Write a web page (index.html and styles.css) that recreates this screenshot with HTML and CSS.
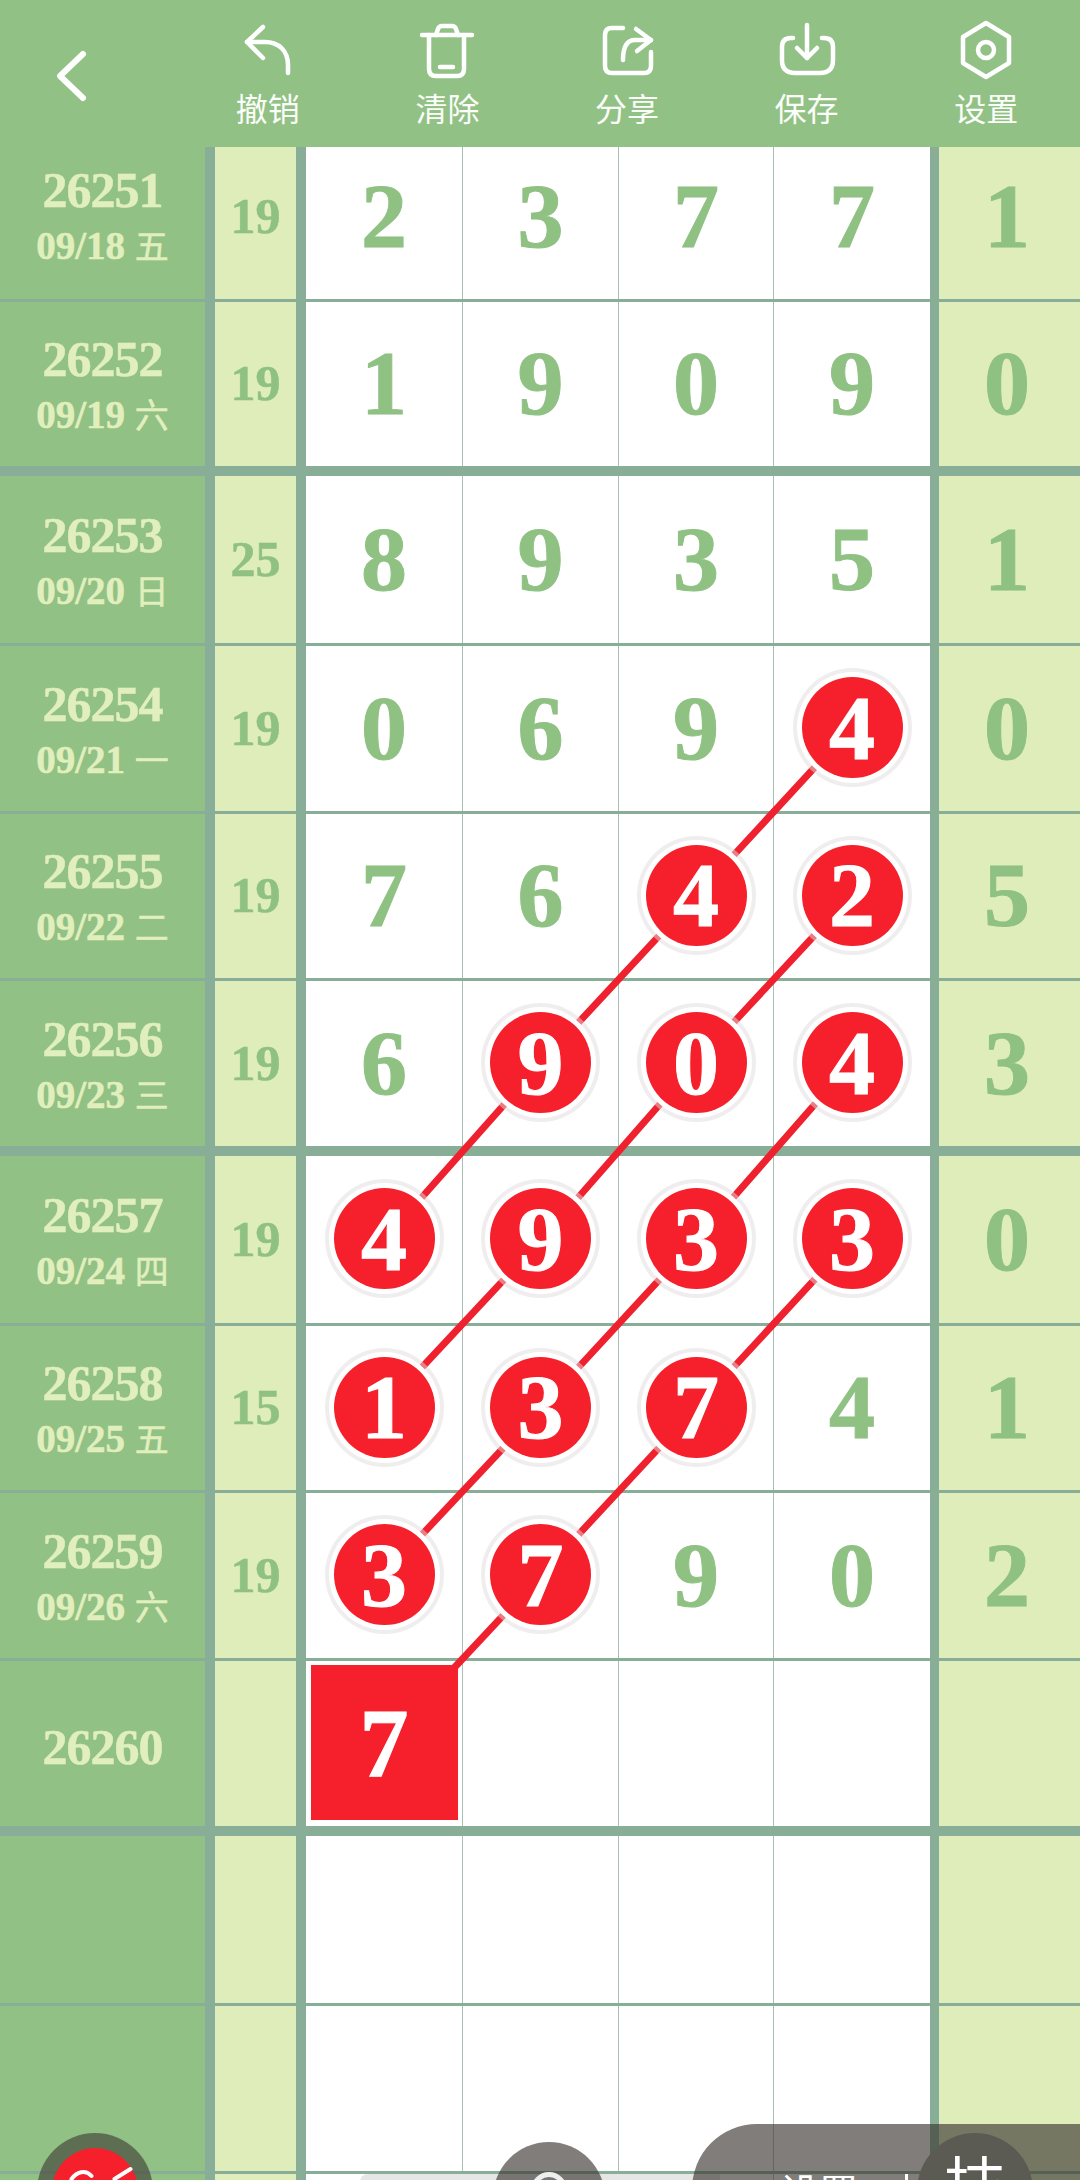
FILE: index.html
```html
<!DOCTYPE html>
<html lang="zh">
<head>
    <meta charset="UTF-8">
    <meta name="viewport" content="width=device-width, initial-scale=1.0">
    <title>走势图</title>
    <link rel="stylesheet" href="styles.css">
</head>
<body>
<div class="page">
    <header class="toolbar">
        <div class="back">
            <svg class="back-icon" viewBox="0 0 40 60"><path d="M28 8 L5 30 L28 52"/></svg>
        </div>
        <div class="tool">
            <svg viewBox="0 0 60 60"><path d="M9 22 H27 C41 22 50 31 50 45 V53"/><path d="M25 7 L9 22 L25 38"/></svg>
            <span>撤销</span>
        </div>
        <div class="tool">
            <svg viewBox="0 0 60 60"><path d="M5 15 H55"/><path d="M19 15 L21 9 Q22 6 25 6 H35 Q38 6 39 9 L41 15"/><path d="M12 15 V49 Q12 56 19 56 H40 Q47 56 47 49 V15"/><path d="M23 47 H36"/></svg>
            <span>清除</span>
        </div>
        <div class="tool">
            <svg viewBox="0 0 60 60"><path d="M26 8 H15 Q8 8 8 15 V46 Q8 53 15 53 H47 Q54 53 54 46 V32"/><path d="M54 20 H38 Q26 20 26 40"/><path d="M39 9 L54 20 L40 31"/></svg>
            <span>分享</span>
        </div>
        <div class="tool">
            <svg viewBox="0 0 60 60"><path d="M16 18 H14 Q5 18 5 27 V40 Q5 53 18 53 H43 Q56 53 56 40 V27 Q56 18 47 18 H45"/><path d="M30 5 V38"/><path d="M20 28 L30 38 L40 28"/></svg>
            <span>保存</span>
        </div>
        <div class="tool">
            <svg viewBox="0 0 60 60"><path d="M30 3 L53 17 V43 L30 57 L7 43 V17 Z"/><circle cx="30" cy="30" r="8"/></svg>
            <span>设置</span>
        </div>
    </header>

    <main class="board">
        <div class="row first">
            <div class="issue"><b>26251</b><i>09/18 <em>五</em></i></div>
            <div class="sum">19</div>
            <div class="num">2</div><div class="num">3</div><div class="num">7</div><div class="num">7</div>
            <div class="tail">1</div>
        </div>
        <div class="row thick">
            <div class="issue"><b>26252</b><i>09/19 <em>六</em></i></div>
            <div class="sum">19</div>
            <div class="num">1</div><div class="num">9</div><div class="num">0</div><div class="num">9</div>
            <div class="tail">0</div>
        </div>
        <div class="row">
            <div class="issue"><b>26253</b><i>09/20 <em>日</em></i></div>
            <div class="sum">25</div>
            <div class="num">8</div><div class="num">9</div><div class="num">3</div><div class="num">5</div>
            <div class="tail">1</div>
        </div>
        <div class="row">
            <div class="issue"><b>26254</b><i>09/21 <em>一</em></i></div>
            <div class="sum">19</div>
            <div class="num">0</div><div class="num">6</div><div class="num">9</div><div class="num"><span class="ball">4</span></div>
            <div class="tail">0</div>
        </div>
        <div class="row">
            <div class="issue"><b>26255</b><i>09/22 <em>二</em></i></div>
            <div class="sum">19</div>
            <div class="num">7</div><div class="num">6</div><div class="num"><span class="ball">4</span></div><div class="num"><span class="ball">2</span></div>
            <div class="tail">5</div>
        </div>
        <div class="row thick">
            <div class="issue"><b>26256</b><i>09/23 <em>三</em></i></div>
            <div class="sum">19</div>
            <div class="num">6</div><div class="num"><span class="ball">9</span></div><div class="num"><span class="ball">0</span></div><div class="num"><span class="ball">4</span></div>
            <div class="tail">3</div>
        </div>
        <div class="row">
            <div class="issue"><b>26257</b><i>09/24 <em>四</em></i></div>
            <div class="sum">19</div>
            <div class="num"><span class="ball">4</span></div><div class="num"><span class="ball">9</span></div><div class="num"><span class="ball">3</span></div><div class="num"><span class="ball">3</span></div>
            <div class="tail">0</div>
        </div>
        <div class="row">
            <div class="issue"><b>26258</b><i>09/25 <em>五</em></i></div>
            <div class="sum">15</div>
            <div class="num"><span class="ball">1</span></div><div class="num"><span class="ball">3</span></div><div class="num"><span class="ball">7</span></div><div class="num">4</div>
            <div class="tail">1</div>
        </div>
        <div class="row">
            <div class="issue"><b>26259</b><i>09/26 <em>六</em></i></div>
            <div class="sum">19</div>
            <div class="num"><span class="ball">3</span></div><div class="num"><span class="ball">7</span></div><div class="num">9</div><div class="num">0</div>
            <div class="tail">2</div>
        </div>
        <div class="row thick">
            <div class="issue"><b>26260</b></div>
            <div class="sum"></div>
            <div class="num"><span class="pick">7</span></div><div class="num"></div><div class="num"></div><div class="num"></div>
            <div class="tail"></div>
        </div>
        <div class="row">
            <div class="issue"></div><div class="sum"></div>
            <div class="num"></div><div class="num"></div><div class="num"></div><div class="num"></div>
            <div class="tail"></div>
        </div>
        <div class="row">
            <div class="issue"></div><div class="sum"></div>
            <div class="num"></div><div class="num"></div><div class="num"></div><div class="num"></div>
            <div class="tail"></div>
        </div>
        <div class="row last">
            <div class="issue"></div><div class="sum"></div>
            <div class="num"></div><div class="num"></div><div class="num"></div><div class="num"></div>
            <div class="tail"></div>
        </div>
    </main>

    <!-- links between the picked numbers -->
    <svg class="links" viewBox="0 0 1080 2180">
        <polyline points="851,728 696,896 541,1063 384,1240"/>
        <polyline points="851,896 696,1063 541,1240 384,1408"/>
        <polyline points="851,1063 696,1240 541,1408 384,1575"/>
        <polyline points="851,1240 696,1408 541,1575 454,1668"/>
    </svg>

    <!-- floating controls, cut by the bottom of the screen -->
    <div class="fab-pen">
        <div class="fab-pen-inner">
            <svg viewBox="0 0 85 40"><path d="M19 31 C24 24 33 21 39 28"/><path d="M62 31 L78 21"/></svg>
        </div>
    </div>
    <div class="tray"></div>
    <div class="fab-grey"><div class="fab-ring"></div></div>
    <div class="pill"><span class="pill-text">设置</span><span class="pill-bar"></span></div>
    <div class="fab-dark">技</div>
</div>
</body>
</html>
```

FILE: styles.css
```css
* {
    box-sizing: border-box;
}
html, body {
    margin: 0;
    padding: 0;
}
body {
    font-family: "Liberation Serif", "Noto Sans CJK SC", serif;
}
.page {
    position: relative;
    width: 1080px;
    height: 2180px;
    overflow: hidden;
    background-color: #fff;
}

/* toolbar */
.toolbar {
    display: flex;
    height: 147px;
    padding-right: 4px;
    background-color: #92c186;
}
.back {
    width: 178px;
    padding: 46px 0 0 55px;
}
.back-icon {
    display: block;
    width: 40px;
    height: 60px;
}
.toolbar svg {
    fill: none;
    stroke: #fff;
    stroke-width: 4.5;
    stroke-linecap: round;
    stroke-linejoin: round;
}
.toolbar .back-icon {
    stroke-width: 6;
}
.tool {
    flex: 1;
    display: flex;
    flex-direction: column;
    align-items: center;
    padding-top: 20px;
}
.tool svg {
    display: block;
    width: 60px;
    height: 60px;
}
.tool span {
    margin-top: 9px;
    font-family: "Noto Sans CJK SC", sans-serif;
    font-size: 32px;
    line-height: 36px;
    color: #fbfdf8;
}

/* board */
.board {
    display: grid;
    height: 2033px;
    grid-template-rows: 155px 174px 170px 168px 167px 175px 170px 167px 168px 175px 170px 168px 1fr;
}
.row {
    display: grid;
    grid-template-columns: 215px 91px 157px 156px 155px 156px 150px;
    border-bottom: 3px solid #88ae97;
    min-height: 0;
}
.row.thick {
    border-bottom-width: 10px;
}
.row.last {
    border-bottom: 0;
}
.row > div {
    display: flex;
    align-items: center;
    justify-content: center;
    font-weight: bold;
}
.issue {
    flex-direction: column;
    padding-top: 6px;
    background-color: #92c186;
    border-right: 10px solid #88ae97;
    color: #e1efbd;
    -webkit-text-stroke: 0.5px #e1efbd;
}
.issue b {
    font-size: 50px;
    line-height: 58px;
    letter-spacing: -1px;
}
.issue i {
    font-style: normal;
    font-size: 39px;
    line-height: 54px;
}
.issue em {
    font-style: normal;
    font-weight: normal;
    font-size: 34px;
}
.sum {
    padding-bottom: 2px;
    background-color: #dfedbb;
    border-right: 10px solid #88ae97;
    color: #8fc183;
    font-size: 50px;
    -webkit-text-stroke: 0.5px #8fc183;
}
.num {
    padding-bottom: 2px;
    border-right: 1px solid #a9c0b4;
    color: #8fc183;
    font-size: 92px;
    -webkit-text-stroke: 1px #8fc183;
}
.row .num:nth-child(6) {
    border-right: 0;
}
.tail {
    padding: 0 5px 2px 0;
    background-color: #dfedbb;
    border-left: 9px solid #88ae97;
    color: #8fc183;
    font-size: 92px;
    -webkit-text-stroke: 1px #8fc183;
}
.row.first > div {
    padding-bottom: 15px;
}
.row.first > .issue {
    padding-bottom: 17px;
}
.ball {
    position: relative;
    z-index: 2;
    display: flex;
    align-items: center;
    justify-content: center;
    width: 101px;
    height: 101px;
    border-radius: 50%;
    background-color: #f5202c;
    box-shadow: 0 0 0 5px #fff, 0 0 0 9px rgba(225, 220, 222, 0.5);
    color: #fff;
    -webkit-text-stroke: 1px #fff;
}
.pick {
    position: relative;
    z-index: 2;
    display: flex;
    align-items: center;
    justify-content: center;
    width: 147px;
    height: 155px;
    background-color: #f5202c;
    color: #fff;
    font-size: 98px;
    -webkit-text-stroke: 1px #fff;
}
.links {
    position: absolute;
    top: 0;
    left: 0;
    z-index: 1;
    width: 1080px;
    height: 2180px;
}
.links polyline {
    fill: none;
    stroke: #f0212e;
    stroke-width: 7;
}

/* floating controls */
.fab-pen {
    position: absolute;
    z-index: 3;
    left: 37px;
    top: 2133px;
    width: 116px;
    height: 116px;
    padding: 15px;
    border-radius: 50%;
    background-color: rgba(60, 55, 50, 0.6);
}
.fab-pen-inner {
    width: 86px;
    height: 86px;
    border-radius: 50%;
    background-color: #f5202c;
}
.fab-pen-inner svg {
    display: block;
    width: 86px;
    height: 40px;
    fill: none;
    stroke: #fff;
    stroke-width: 4;
    stroke-linecap: round;
}
.tray {
    position: absolute;
    z-index: 3;
    left: 360px;
    top: 2174px;
    width: 360px;
    height: 40px;
    border-radius: 8px 0 0 0;
    background-color: #e6e6e6;
}
.fab-grey {
    position: absolute;
    z-index: 4;
    left: 493px;
    top: 2142px;
    width: 112px;
    height: 112px;
    padding-top: 30px;
    border-radius: 50%;
    background-color: rgba(60, 55, 50, 0.65);
}
.fab-ring {
    width: 36px;
    height: 36px;
    margin: 0 auto;
    border: 5px solid #eee;
    border-radius: 50%;
}
.pill {
    position: absolute;
    z-index: 4;
    left: 692px;
    top: 2124px;
    display: flex;
    width: 420px;
    height: 130px;
    padding: 44px 0 0 88px;
    border-radius: 65px 0 0 65px;
    background-color: rgba(60, 55, 50, 0.65);
}
.pill-text {
    font-family: "Noto Sans CJK SC", sans-serif;
    font-size: 39px;
    line-height: 44px;
    color: #fff;
}
.pill-bar {
    width: 3px;
    height: 30px;
    margin: 6px 0 0 47px;
    background-color: #fff;
}
.fab-dark {
    position: absolute;
    z-index: 5;
    left: 917px;
    top: 2133px;
    width: 116px;
    height: 116px;
    padding-top: 14px;
    border-radius: 50%;
    background-color: #5c5b53;
    font-family: "Noto Sans CJK SC", sans-serif;
    font-size: 62px;
    line-height: 70px;
    text-align: center;
    color: #fff;
}
```
